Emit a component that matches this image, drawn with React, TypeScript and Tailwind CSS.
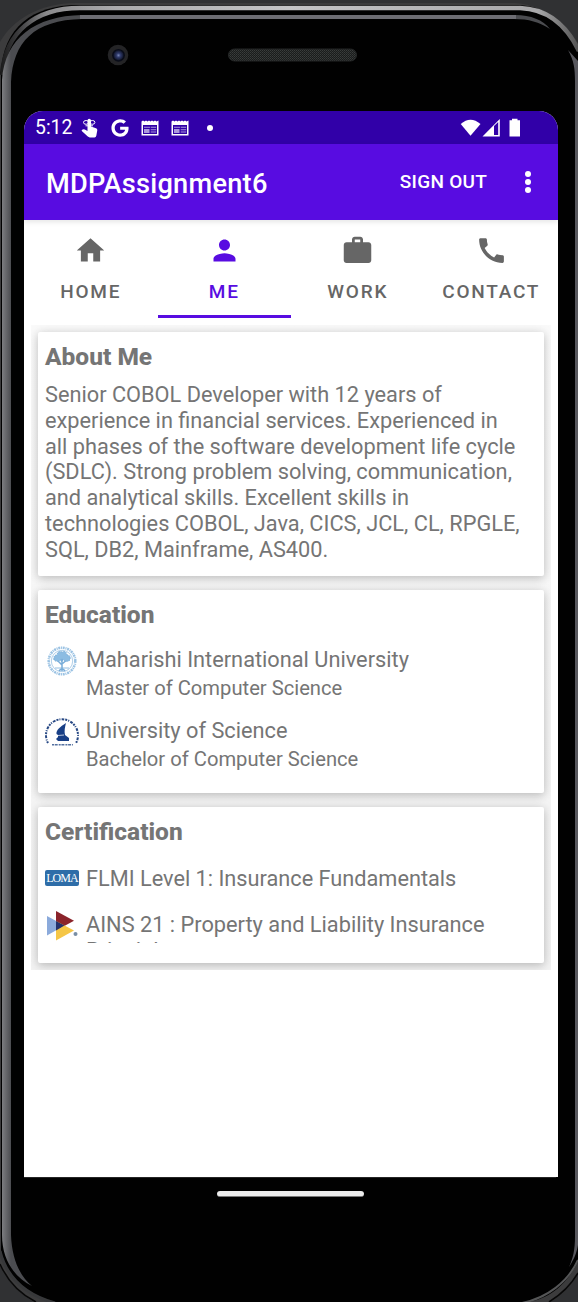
import type { ReactNode } from "react";
import { FaGoogle } from "react-icons/fa";

function PhoneFrame() {
  return (
    <svg className="absolute inset-0 h-[1302px] w-[578px]" viewBox="0 0 578 1302" fill="none" aria-hidden="true">
      <defs>
        <linearGradient id="outer" x1="0" y1="0" x2="578" y2="0" gradientUnits="userSpaceOnUse">
          <stop offset="0" stopColor="#1a1a1a" />
          <stop offset="0.03" stopColor="#3a3a3c" />
          <stop offset="0.08" stopColor="#8a8a8c" />
          <stop offset="0.2" stopColor="#aaaaac" />
          <stop offset="0.5" stopColor="#c4c4c6" />
          <stop offset="0.93" stopColor="#a8a8aa" />
          <stop offset="1" stopColor="#555" />
        </linearGradient>
        <linearGradient id="side" x1="0" y1="0" x2="11" y2="0" gradientUnits="userSpaceOnUse">
          <stop offset="0" stopColor="#87888b" />
          <stop offset="1" stopColor="#4b4c50" />
        </linearGradient>
        <pattern id="mesh" width="2" height="2" patternUnits="userSpaceOnUse">
          <rect width="2" height="2" fill="#1a1c1c" />
          <rect width="1" height="1" fill="#3a3d3c" />
          <rect x="1" y="1" width="1" height="1" fill="#303332" />
        </pattern>
        <radialGradient id="lens">
          <stop offset="0" stopColor="#7886b4" />
          <stop offset="0.4" stopColor="#303b6c" />
          <stop offset="1" stopColor="#11162b" />
        </radialGradient>
      </defs>
      <rect width="578" height="1302" fill="#303133" />
      <path d="M0 1302V42C12 20 40 3 76 3H515C545 5 567 25 578 43V1302Z" fill="#3c3c3d" />
      <path d="M1 1250V72C3 28 32 5 78 5H518C550 6 569 27 579 50V1260C567 1284 548 1302 522 1302H52C24 1294 4 1275 1 1250Z" fill="#010101" />
      <path d="M2 75C5 32 35 8 80 8H520C549 9 567 26 579 51" stroke="url(#outer)" strokeWidth="4.5" />
      <path d="M2 80C5 38 35 16 82 15H515C531 15 543 20 550 29C539 22 529 19 514 19H82C34 20 13 42 11 82V1235C12 1260 20 1276 32 1286C15 1278 2 1260 2 1235Z" fill="url(#side)" />
      <path d="M80 17H516" stroke="#6d6d73" strokeWidth="4" />
      <path d="M568 50C574 61 575 68 575 82V1236C575 1250 573 1258 569 1267C575 1258 577 1251 578 1245V61Z" fill="#57575d" />
      <path d="M0 1251C7 1279 26 1295 55 1303" stroke="#37383a" strokeWidth="3" />
      <path d="M522 1303C547 1298 568 1282 578 1260" stroke="#555657" strokeWidth="2" />
      <path d="M0 1265C9 1283 20 1294 34 1302H0ZM578 1274C571 1286 562 1295 550 1302H578Z" fill="#303133" />
      <path d="M0 1264C8 1282 20 1294 36 1302M578 1273C571 1285 562 1294 549 1302" stroke="#080808" strokeWidth="1.5" />
      <circle cx="118" cy="55" r="10.3" fill="#242426" />
      <circle cx="118.5" cy="55.3" r="6.4" fill="#090c18" />
      <circle cx="118.5" cy="55.3" r="5" fill="url(#lens)" />
      <rect x="228.500" y="49" width="128" height="12" rx="6" fill="url(#mesh)" stroke="#252727" />
    </svg>
  );
}

function NewsIcon() {
  return (
    <svg className="h-[16px] w-[18px]" viewBox="0 0 18 16" fill="#fff" aria-hidden="true">
      <path fillRule="evenodd" d="M0.500 1.500L2 0.500L3.500 1.500L5 0.500L6.500 1.500L8 0.500L9.500 1.500L11 0.500L12.500 1.500L14 0.500L15.500 1.500L17.500 0.500V15.500H0.500ZM2 5V14H16V5Z" />
      <path d="M3 6.800h6v1h-6zM9.700 6.800h5.500v1h-5.500zM3 9h5.500v4h-5.500zM9.700 9.300h5.500v1h-5.500zM9.700 11.500h5.500v1h-5.500z" opacity="0.6" />
    </svg>
  );
}

function FingerIcon() {
  return (
    <svg className="h-[20px] w-[17px]" viewBox="0 0 17 20" aria-hidden="true">
      <path d="M6.500 13V2.500Q6.500 0.700 8.200 0.700T10 2.500V8.500L15 10.200Q16.500 10.800 16.300 12.300L15.300 17.800Q15 19.400 13.500 19.400H8.800Q7.600 19.400 6.800 18.600L0.500 12.700L1.500 11.500Q2.600 11 3.800 11.500Z" fill="#fff" />
      <ellipse cx="5.100" cy="4.400" rx="2.600" ry="1.900" fill="none" stroke="#fff" />
      <ellipse cx="11.300" cy="4.400" rx="2.600" ry="1.900" fill="none" stroke="#fff" />
      <path d="M4.500 7.800h7.500" stroke="#fff" strokeWidth="1" />
    </svg>
  );
}

function StatusBar() {
  return (
    <div className="flex h-[33px] shrink-0 items-center bg-[#3100a8] pl-[11px] text-white">
      <span className="w-[46px] pt-[1px] text-[19.400px] leading-[24px]">5:12</span>
      <FingerIcon />
      <FaGoogle className="ml-[13px] h-[18px] w-[18px]" />
      <span className="ml-[12px] flex gap-[12px]">
        <NewsIcon />
        <NewsIcon />
      </span>
      <span className="ml-[18px] h-[6px] w-[6px] rounded-full bg-white" />
      <svg className="ml-auto mr-[36px] h-[20px] w-[62px]" viewBox="0 0 62 20" fill="#fff" aria-hidden="true">
        <path d="M0.700 6Q10.500-2.500 20.500 6L10.500 17.800Z" />
        <path fillRule="evenodd" d="M22.500 18.500L39.800 1V18.500ZM34 8.100V16.900H38.200V3.900Z" />
        <path d="M49.500 2.200H52V0.700h5.500v1.500H60V18.500H49.500Z" />
      </svg>
    </div>
  );
}

function Toolbar() {
  return (
    <div className="relative z-10 flex h-[76px] shrink-0 items-center bg-[#580ce1] pl-[22px] text-white shadow-[0_2px_5px_rgba(0,0,0,0.1)]">
      <h1 className="pt-[3px] text-[27.200px] font-medium leading-[32px] tracking-[0.240px]">MDPAssignment6</h1>
      <button className="ml-auto text-[19px] font-medium leading-[24px] tracking-[0.250px]">SIGN OUT</button>
      <button aria-label="More options" className="ml-[38px] mr-[27px] flex w-[6px] flex-col gap-[2px]">
        <span className="h-[6px] w-[6px] rounded-full bg-white" />
        <span className="h-[6px] w-[6px] rounded-full bg-white" />
        <span className="h-[6px] w-[6px] rounded-full bg-white" />
      </button>
    </div>
  );
}

const tabs = [
  { label: "HOME", path: "M10 20v-6h4v6h5v-8h3L12 3 2 12h3v8z" },
  { label: "ME", path: "M12 12c2.210 0 4-1.790 4-4s-1.790-4-4-4-4 1.790-4 4 1.790 4 4 4zm0 2c-2.670 0-8 1.340-8 4v2h16v-2c0-2.660-5.330-4-8-4z", active: true },
  { label: "WORK", path: "M20 6h-4V4c0-1.110-.89-2-2-2h-4c-1.110 0-2 .89-2 2v2H4c-1.110 0-1.990.89-1.990 2L2 19c0 1.110.89 2 2 2h16c1.110 0 2-.89 2-2V8c0-1.110-.89-2-2-2zm-6 0h-4V4h4v2z" },
  { label: "CONTACT", path: "M20.010 15.380c-1.230 0-2.420-.2-3.530-.56-.35-.12-.74-.03-1.010.24l-1.570 1.970c-2.830-1.350-5.480-3.900-6.890-6.830l1.950-1.660c.27-.28.35-.67.24-1.020-.37-1.110-.56-2.300-.56-3.530 0-.54-.45-.99-.99-.99H4.190C3.650 3 3 3.240 3 3.990 3 13.280 10.730 21 20.010 21c.71 0 .99-.63.99-1.180v-3.450c0-.54-.45-.99-.99-.99z" },
];

function Tabs() {
  return (
    <nav className="grid h-[98px] shrink-0 grid-cols-4">
      {tabs.map((tab) => (
        <button
          key={tab.label}
          className={
            tab.active
              ? "flex flex-col items-center border-b-[3px] border-[#580ce1] pt-[14px] text-[#580ce1]"
              : "flex flex-col items-center border-b-[3px] border-transparent pt-[14px] text-[#666]"
          }
        >
          <svg className="h-[33px] w-[33px]" viewBox="0 0 24 24" fill="currentColor" aria-hidden="true">
            <path d={tab.path} />
          </svg>
          <span className="mt-[13px] whitespace-nowrap text-[19px] font-medium leading-[24px] tracking-[1.750px]">{tab.label}</span>
        </button>
      ))}
    </nav>
  );
}

function Card({ title, className, children }: { title: string; className: string; children: ReactNode }) {
  return (
    <section className={`shrink-0 rounded-[2px] bg-white px-[7px] pt-[11px] shadow-[0_3px_8px_rgba(0,0,0,0.16),0_0_12px_rgba(0,0,0,0.10)] ${className}`}>
      <h2 className="text-[24.500px] font-extrabold leading-[28px]">{title}</h2>
      {children}
    </section>
  );
}

function TreeSeal() {
  return (
    <svg className="ml-[1px] h-[32px] w-[32px]" viewBox="0 0 32 32" fill="none" stroke="#78add9" aria-hidden="true">
      <circle cx="16" cy="15" r="13.300" strokeWidth="2.500" strokeDasharray="2 0.800 1 0.700" opacity="0.75" />
      <circle cx="16" cy="15" r="10.700" strokeWidth="0.600" />
      <path d="M16 25V12M16 19L10 13M16 18L22 13M13 25Q16 21 19 25M16 16L13 9M16 15L19 9" strokeWidth="1.500" />
      <path d="M8 14Q7 9 11 9Q12 4 16 6Q20 4 21 9Q25 9 24 14Q21 17 16 13Q11 17 8 14Z" fill="#8cbce2" strokeDasharray="1.500 1" />
      <path d="M9 22h14" strokeWidth="0.800" />
    </svg>
  );
}

function ScienceSeal() {
  return (
    <svg className="-ml-[1px] h-[30px] w-[36px]" viewBox="0 0 36 30" fill="none" aria-hidden="true">
      <path d="M4 26A16 16 0 1 1 32 26" stroke="#274884" strokeWidth="2" strokeDasharray="2 1 1 1.300 2.800 1" />
      <path d="M8 27.800H29" stroke="#5571a0" strokeWidth="1.500" strokeDasharray="2 0.700 3 1" />
      <path d="M22 6C16 10 12 13 12.500 17L14 18V20L12 22L14 24H25V21L21 18C20 14 21 10 22 6Z" fill="#183f86" />
      <path d="M14 18.500L20 18" stroke="#fff" strokeWidth="0.700" />
    </svg>
  );
}

function LomaLogo() {
  return (
    <span className="-mt-[3px] flex h-[16px] w-[34px] items-center justify-center rounded-[2px] bg-[#2e6da8] font-['Liberation_Serif',serif] text-[12px] leading-[16px] tracking-[-0.900px] text-white">
      LOMA
    </span>
  );
}

function InstituteLogo() {
  return (
    <svg className="ml-[2px] h-[31px] w-[31px]" viewBox="0 0 31 31" aria-hidden="true">
      <path d="M0 5L17.500 14.500L0 24.500Z" fill="#8baadb" />
      <path d="M9 0L27 9.700L9 19.500Z" fill="#8b242b" />
      <path d="M9 10L27 19.500L9 29.500Z" fill="#f5c646" />
      <path d="M9 10L17.500 14.500L9 19.500Z" fill="#24306b" />
      <circle cx="28.500" cy="23" r="2" fill="#788da5" />
    </svg>
  );
}

function School({ logo, name, degree }: { logo: ReactNode; name: string; degree: string }) {
  return (
    <div className="flex h-[71px]">
      <div className="w-[41px] shrink-0">{logo}</div>
      <div className="whitespace-nowrap">
        <p className="text-[21.750px] leading-[28px]">{name}</p>
        <p className="text-[20.200px] leading-[28px]">{degree}</p>
      </div>
    </div>
  );
}

const aboutLines = [
  "Senior COBOL Developer with 12 years of",
  "experience in financial services. Experienced in",
  "all phases of the software development life cycle",
  "(SDLC). Strong problem solving, communication,",
  "and analytical skills. Excellent skills in",
  "technologies COBOL, Java, CICS, JCL, CL, RPGLE,",
  "SQL, DB2, Mainframe, AS400.",
];

export default function App() {
  return (
    <div className="relative h-[1302px] w-[578px] overflow-hidden bg-black font-['Roboto',sans-serif] text-[#757575]">
      <PhoneFrame />
      <div className="relative flex flex-col pl-[24px] pt-[111px]">
        <main className="flex h-[1066px] w-[534px] flex-col overflow-hidden rounded-t-[19px] bg-white">
          <StatusBar />
          <Toolbar />
          <Tabs />
          <div className="mx-[7px] mt-[7px] flex h-[645px] flex-col gap-[14px] overflow-hidden bg-linear-to-b from-[#fafafa] to-[#f2f2f2] px-[7px] pt-[7px]">
            <Card title="About Me" className="h-[244px]">
              <p className="mt-[11px] whitespace-nowrap text-[21.760px] leading-[25.750px]">
                {aboutLines.map((line) => (
                  <span key={line} className="block">{line}</span>
                ))}
              </p>
            </Card>
            <Card title="Education" className="h-[203px]">
              <div className="mt-[17px]">
                <School logo={<TreeSeal />} name="Maharishi International University" degree="Master of Computer Science" />
                <School logo={<ScienceSeal />} name="University of Science" degree="Bachelor of Computer Science" />
              </div>
            </Card>
            <Card title="Certification" className="h-[156px]">
              <div className="mt-[20px] flex h-[27px] items-center text-[21.720px]">
                <div className="w-[41px]"><LomaLogo /></div>
                <p>FLMI Level 1: Insurance Fundamentals</p>
              </div>
              <div className="mt-[18px] flex h-[32px] overflow-hidden text-[21.780px] leading-[25.750px]">
                <div className="w-[41px] shrink-0"><InstituteLogo /></div>
                <p className="whitespace-nowrap pt-[1px]">AINS 21 : Property and Liability Insurance<br />Principles</p>
              </div>
            </Card>
          </div>
        </main>
        <div className="flex w-[532px] justify-center border-t border-[#252525] pt-[13px]">
          <div className="h-[6px] w-[147px] rounded-full border-b border-[#777] bg-[#ececec]" />
        </div>
      </div>
    </div>
  );
}
